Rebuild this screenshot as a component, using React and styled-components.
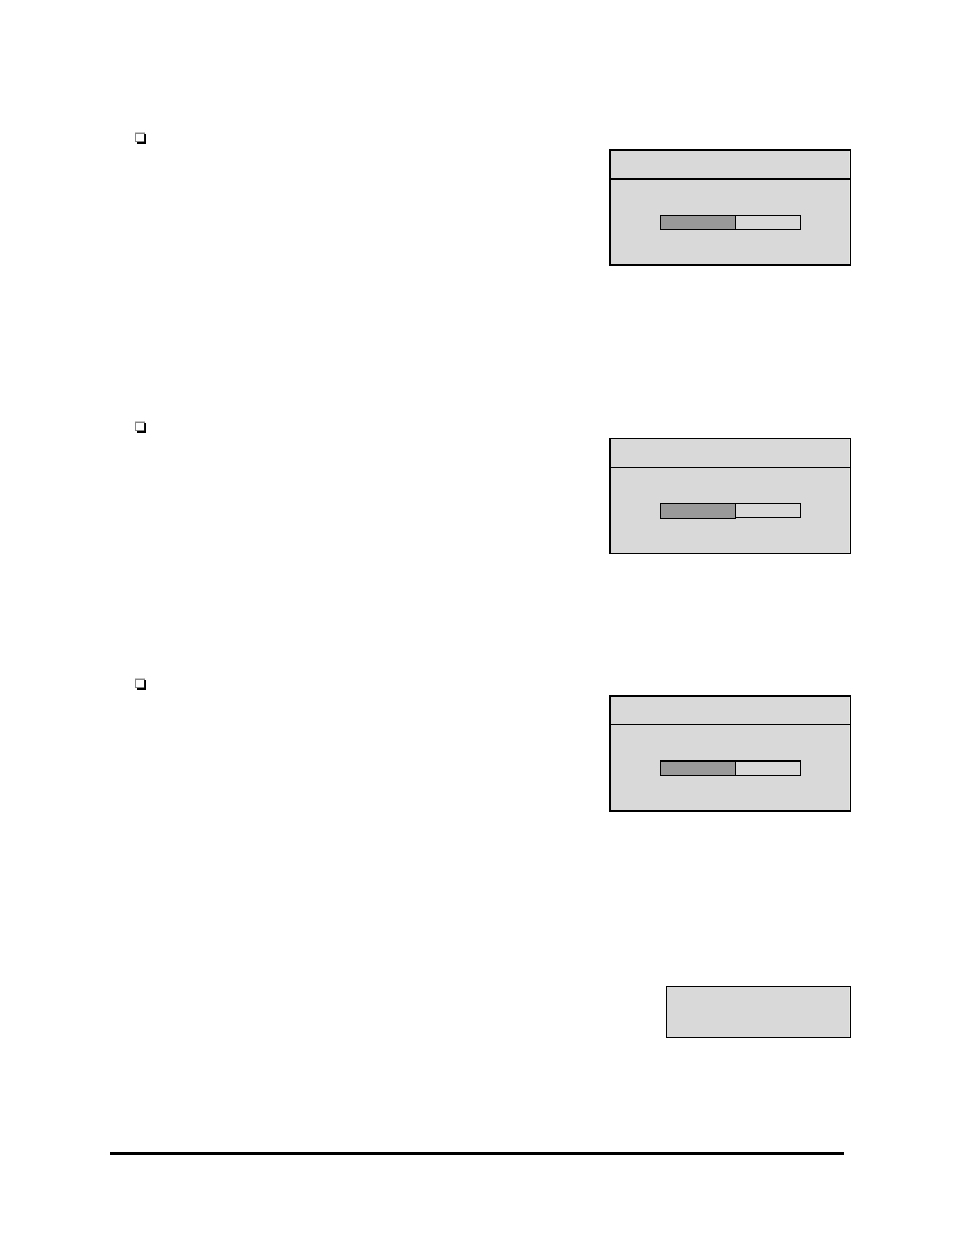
import React from "react";
import styled, { createGlobalStyle } from "styled-components";

const GlobalStyle = createGlobalStyle`
  * { box-sizing: border-box; }
  body { margin: 0; background: #fff; font-family: "Liberation Sans", Arial, sans-serif; }
`;

const Page = styled.main`
  display: flex;
  flex-direction: column;
  min-height: 100vh;
  padding: 132px 103px 80px 110px;
`;

const Steps = styled.ul`
  list-style: none;
  margin: 0;
  padding: 0 0 0 25px;
`;

const Step = styled.li`
  display: flex;
  flex-direction: column;
  gap: 5px;
  min-height: ${(p) => p.$space}px;
`;

const Bullet = styled.svg`
  display: block;
  width: 12px;
  height: 12px;
`;

const Panel = styled.section`
  align-self: flex-end;
  width: 242px;
  max-width: 100%;
  background: #d9d9d9;
  border: solid #000;
  border-width: ${(p) => p.$edge}px 1px ${(p) => p.$edge}px 2px;
  box-shadow: inset -1px 0 #e6e6e2;
`;

const PanelHeader = styled.header`
  height: ${(p) => p.$height}px;
  border-bottom: ${(p) => p.$line}px solid #000;
`;

const PanelBody = styled.div`
  display: flex;
  align-items: flex-start;
  height: ${(p) => p.$height}px;
  padding: 35px 49px 0;
`;

const Track = styled.div`
  display: flex;
  align-items: flex-start;
  width: 100%;
`;

const Fill = styled.div`
  flex: 76 1 0;
  height: ${(p) => p.$height}px;
  background: #999;
  border: 1px solid #000;
  border-top-width: ${(p) => p.$top}px;
`;

const Remainder = styled.div`
  flex: 65 1 0;
  height: ${(p) => p.$height}px;
  border: solid #000;
  border-width: ${(p) => p.$top}px 1px 1px 0;
`;

const Note = styled.aside`
  align-self: flex-end;
  width: 185px;
  height: 52px;
  background: #d9d9d9;
  border: 1px solid #000;
  box-shadow: inset -1px 0 #e6e6e2;
`;

const Rule = styled.hr`
  height: 3px;
  width: auto;
  margin: 114px 7px 0 0;
  border: 0;
  background: #000;
`;

const steps = [
  { space: 289, edge: 2, header: 29, line: 2, body: 84, top: 1, fill: 15, rest: 15 },
  { space: 257, edge: 1, header: 29, line: 1, body: 85, top: 1, fill: 16, rest: 15 },
  { space: 308, edge: 2, header: 28, line: 1, body: 85, top: 2, fill: 16, rest: 16 },
];

function ShadowBox() {
  return (
    <Bullet viewBox="0 0 12 12" aria-hidden="true" shapeRendering="crispEdges">
      <path d="M2 2H11V12H2Z" fill="#000" />
      <path d="M0 0H10V10H0Z" fill="#c4c4c4" />
      <path d="M0 1H10V10H0Z" fill="#858585" />
      <path d="M9 2H10V10H2V10H9Z" fill="#111" />
      <path d="M1 2H9V9H1Z" fill="#fff" />
      <path d="M2 10H10V11H2Z" fill="#000" />
    </Bullet>
  );
}

export default function App() {
  return (
    <>
      <GlobalStyle />
      <Page>
        <Steps>
          {steps.map((s) => (
            <Step key={s.space} $space={s.space}>
              <ShadowBox />
              <Panel $edge={s.edge}>
                <PanelHeader $height={s.header} $line={s.line} />
                <PanelBody $height={s.body}>
                  <Track role="progressbar" aria-valuemin={0} aria-valuemax={100} aria-valuenow={54}>
                    <Fill $height={s.fill} $top={s.top} />
                    <Remainder $height={s.rest} $top={s.top} />
                  </Track>
                </PanelBody>
              </Panel>
            </Step>
          ))}
        </Steps>
        <Note />
        <Rule />
      </Page>
    </>
  );
}
